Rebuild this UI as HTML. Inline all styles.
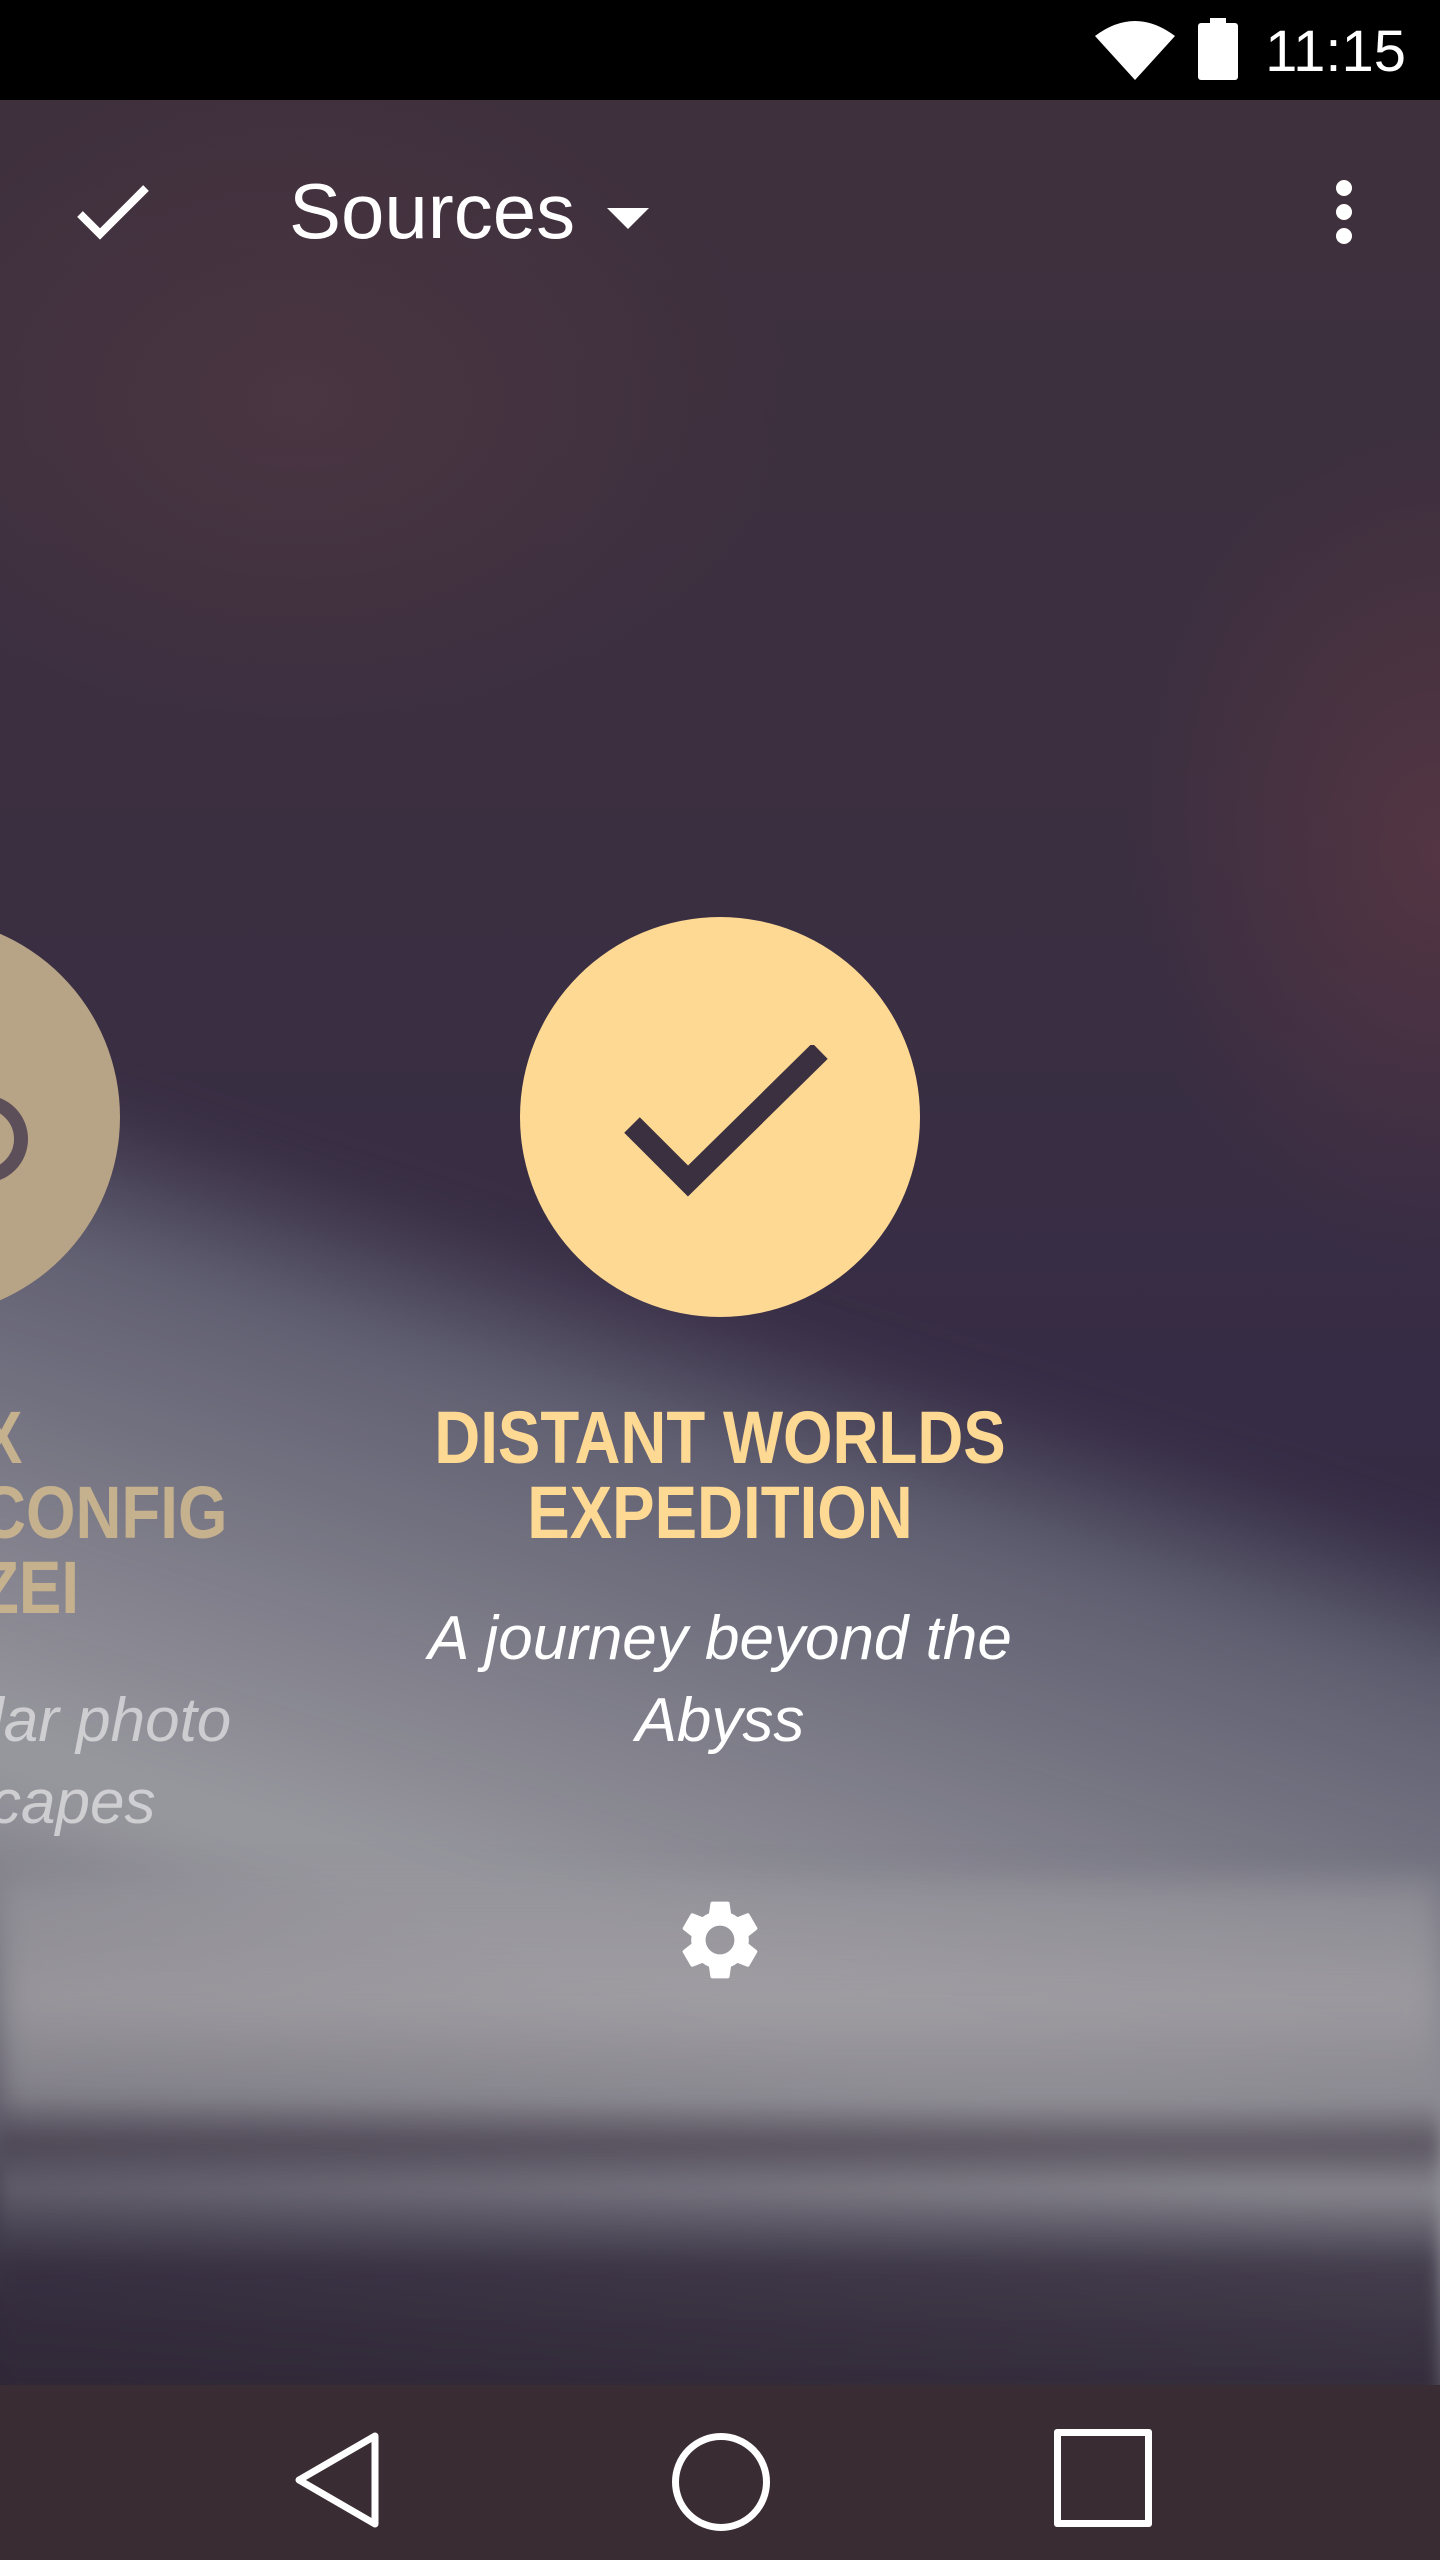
<!DOCTYPE html>
<html><head><meta charset="utf-8"><style>
html,body{margin:0;padding:0;width:1440px;height:2560px;overflow:hidden}
body{position:relative;font-family:"Liberation Sans",sans-serif;background:#3a2d3c}
.bg{position:absolute;inset:0;
background:
radial-gradient(ellipse 450px 600px at 1440px 850px,rgba(130,65,70,.35),transparent 70%),
radial-gradient(ellipse 700px 500px at 300px 400px,rgba(90,60,70,.45),transparent 70%),
linear-gradient(180deg,#3f303c 0%,#3b2f40 30%,#362c45 55%,#2e2a3e 80%,#2e2633 100%);}
.clip{position:absolute;left:0;top:0;width:1440px;height:2560px;overflow:hidden}
.band{position:absolute;left:-200px;top:1000px;width:2000px;height:1200px;transform:rotate(18deg);transform-origin:0 0;
background:linear-gradient(180deg,rgba(110,110,130,0) 0%,rgba(110,112,128,.75) 12%,rgba(140,140,150,.85) 35%,rgba(165,165,170,.9) 55%,rgba(120,118,130,.8) 75%,rgba(60,55,75,0) 100%);filter:blur(30px)}
.band2{position:absolute;left:0;top:1880px;width:1440px;height:300px;
background:linear-gradient(180deg,rgba(150,148,155,.6) 0%,rgba(160,158,162,.85) 40%,rgba(140,138,145,.8) 70%,rgba(90,85,100,0) 100%);filter:blur(15px)}
.dark{position:absolute;left:0;top:2100px;width:1440px;height:300px;
background:linear-gradient(180deg,rgba(60,52,66,0) 0%,rgba(70,62,76,.7) 15%,rgba(120,118,128,.5) 30%,rgba(55,48,65,.85) 55%,rgba(48,40,55,.95) 100%);filter:blur(8px)}
.status{position:absolute;left:0;top:0;width:1440px;height:100px;background:#000}
.time{position:absolute;right:34px;top:18px;color:#fff;font-size:58px}
.nav{position:absolute;left:0;top:2385px;width:1440px;height:175px;background:#3a2c33}
.abs{position:absolute}
.title{position:absolute;left:0;width:1440px;text-align:center;color:#fdd994;font-weight:bold;font-size:74px;line-height:75px;top:1400px;transform:scaleX(.86);transform-origin:720px 0}
.sub{position:absolute;left:0;width:1440px;text-align:center;color:#fff;font-style:italic;font-size:62px;line-height:82px;top:1598px}
</style></head><body>
<div class="bg"></div>
<div class="clip"><div class="band"></div><div class="band2"></div><div class="dark"></div></div>
<div class="status">
<svg class="abs" style="left:1095px;top:18px" width="80" height="62" viewBox="0 0 80 62"><path d="M0 18 Q40 -12 80 18 L40 62 Z" fill="#fff"/></svg>
<svg class="abs" style="left:1198px;top:18px" width="40" height="62" viewBox="0 0 40 62"><rect x="12" y="0" width="16" height="6" fill="#fff"/><rect x="0" y="5" width="40" height="57" rx="3" fill="#fff"/></svg>
<div class="time">11:15</div>
</div>
<svg class="abs" style="left:76px;top:184px" width="74" height="56" viewBox="0 0 74 56"><path d="M4 30 L24 50 L70 4" stroke="#fff" stroke-width="8" fill="none"/></svg>
<div class="abs" style="left:289px;top:166px;color:#fff;font-size:78px">Sources</div>
<svg class="abs" style="left:607px;top:208px" width="42" height="22"><path d="M0 0 L42 0 L21 21Z" fill="#fff"/></svg>
<svg class="abs" style="left:1327px;top:178px" width="34" height="70"><circle cx="17" cy="10" r="8" fill="#fff"/><circle cx="17" cy="34" r="8" fill="#fff"/><circle cx="17" cy="58" r="8" fill="#fff"/></svg>
<div class="abs" style="left:-280px;top:917px;width:400px;height:400px;border-radius:50%;background:#b7a385"></div>
<div class="abs" style="top:1095px;width:60px;height:60px;border-radius:50%;border:14px solid #5d4f5a;left:-60px"></div>
<div class="abs" style="left:-20px;top:1400px;color:#c5b18e;font-weight:bold;font-size:74px;line-height:75px;transform:scaleX(.86);transform-origin:0 0">X<br>CONFIG<br>ZEI</div>
<div class="abs" style="left:-10px;top:1680px;color:rgba(255,255,255,.55);font-style:italic;font-size:62px;line-height:82px">lar photo<br>capes</div>
<div class="abs" style="left:520px;top:917px;width:400px;height:400px;border-radius:50%;background:#fdd994"></div>
<svg class="abs" style="left:620px;top:1045px" width="210" height="165" viewBox="0 0 210 165"><path d="M12 80 L68 136 L200 6" stroke="#3a3040" stroke-width="22" fill="none"/></svg>
<div class="title">DISTANT WORLDS<br>EXPEDITION</div>
<div class="sub">A journey beyond the<br>Abyss</div>
<svg class="abs" style="left:672px;top:1892px" width="96" height="96" viewBox="0 0 24 24"><path fill="#fff" d="M19.14 12.94c.04-.3.06-.61.06-.94 0-.32-.02-.64-.07-.94l2.03-1.58a.49.49 0 0 0 .12-.61l-1.92-3.32a.488.488 0 0 0-.59-.22l-2.39.96c-.5-.38-1.03-.7-1.62-.94l-.36-2.54a.484.484 0 0 0-.48-.41h-3.84c-.24 0-.43.17-.47.41l-.36 2.54c-.59.24-1.13.57-1.62.94l-2.39-.96c-.22-.08-.47 0-.59.22L2.74 8.87c-.12.21-.08.47.12.61l2.03 1.58c-.05.3-.09.63-.09.94s.02.64.07.94l-2.03 1.58a.49.49 0 0 0-.12.61l1.92 3.32c.12.22.37.29.59.22l2.39-.96c.5.38 1.03.7 1.62.94l.36 2.54c.05.24.24.41.48.41h3.84c.24 0 .44-.17.47-.41l.36-2.54c.59-.24 1.13-.56 1.62-.94l2.39.96c.22.08.47 0 .59-.22l1.92-3.32c.12-.22.07-.47-.12-.61l-2.01-1.58zM12 15.6c-1.98 0-3.6-1.62-3.6-3.6s1.62-3.6 3.6-3.6 3.6 1.62 3.6 3.6-1.62 3.6-3.6 3.6z"/></svg>
<div class="nav">
<svg class="abs" style="left:293px;top:45px" width="90" height="100" viewBox="0 0 90 100"><path d="M6 50 L82 6 L82 94 Z" stroke="#fff" stroke-width="7" fill="none" stroke-linejoin="round"/></svg>
<div class="abs" style="left:672px;top:48px;width:84px;height:84px;border:7px solid #fff;border-radius:50%"></div>
<div class="abs" style="left:1054px;top:44px;width:84px;height:84px;border:7px solid #fff;border-radius:3px"></div>
</div>
</body></html>
